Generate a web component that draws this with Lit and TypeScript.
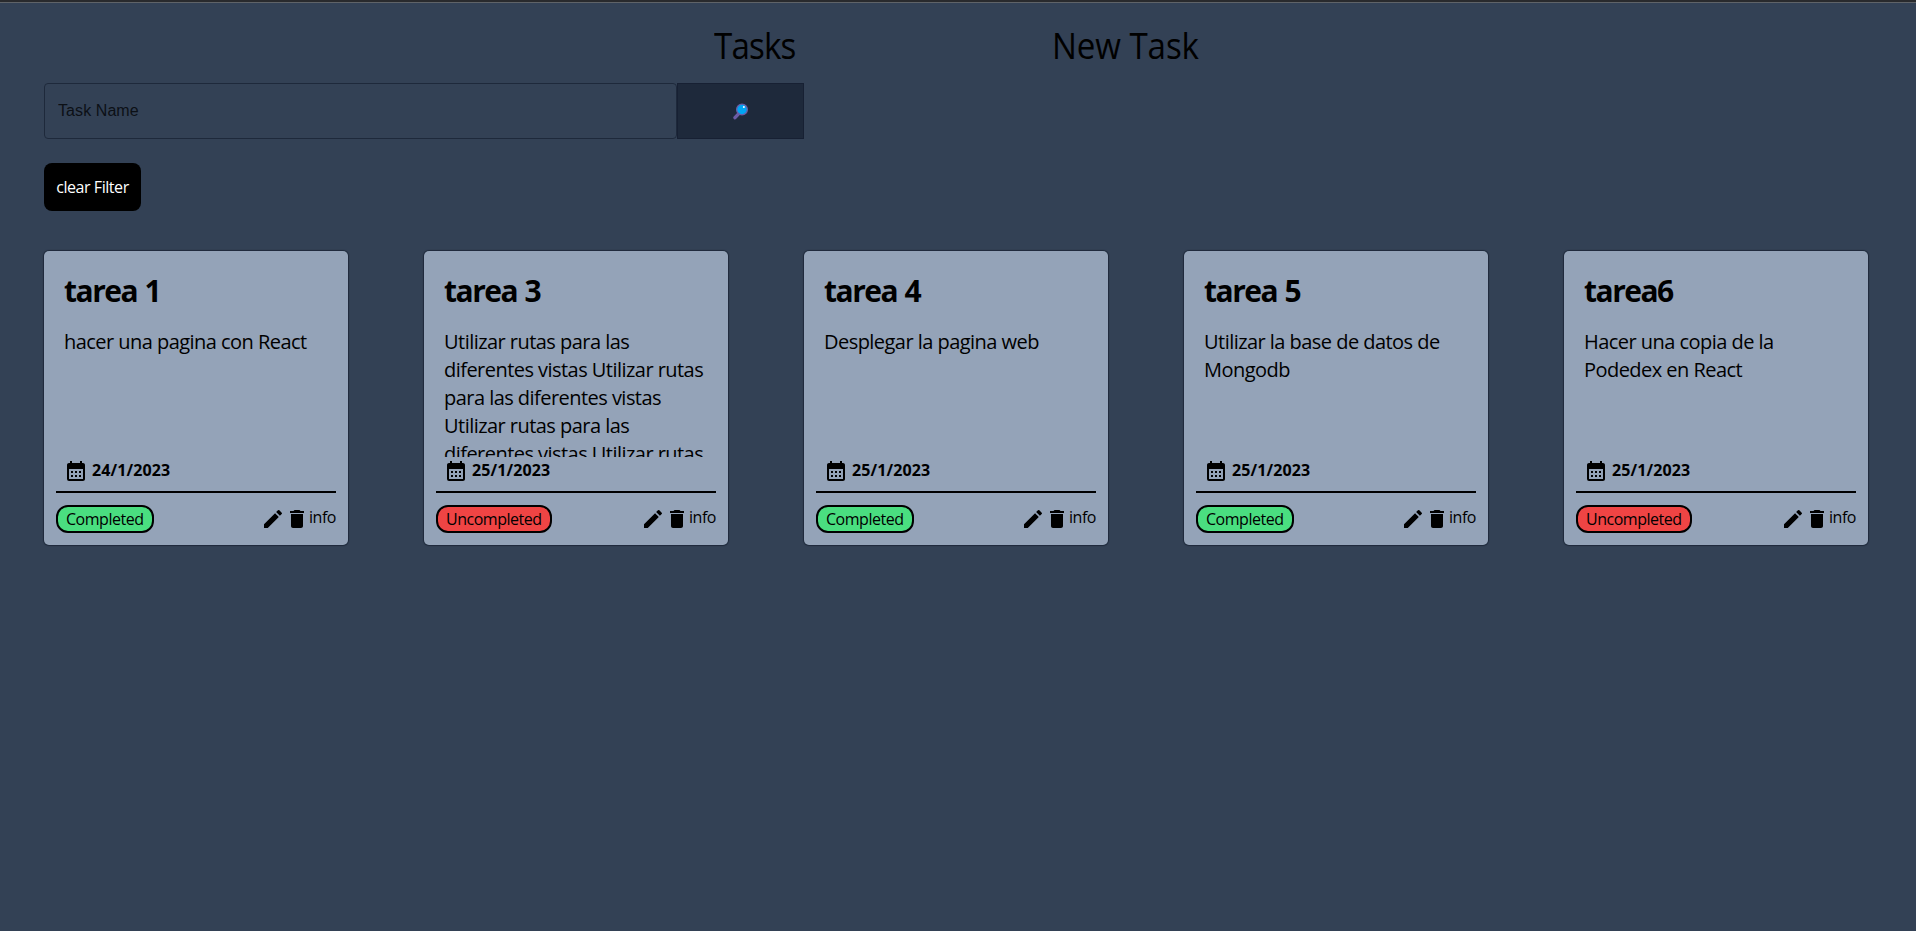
import { LitElement, html, css } from "lit";
import { customElement, property } from "lit/decorators.js";

interface Task {
  title: string;
  description: string;
  date: string;
  done: boolean;
}

const tasks: Task[] = [
  { title: "tarea 1", description: "hacer una pagina con React", date: "24/1/2023", done: true },
  {
    title: "tarea 3",
    description:
      "Utilizar rutas para las diferentes vistas Utilizar rutas para las diferentes vistas Utilizar rutas para las diferentes vistas Utilizar rutas",
    date: "25/1/2023",
    done: false,
  },
  { title: "tarea 4", description: "Desplegar la pagina web", date: "25/1/2023", done: true },
  { title: "tarea 5", description: "Utilizar la base de datos de Mongodb", date: "25/1/2023", done: true },
  { title: "tarea6", description: "Hacer una copia de la Podedex en React", date: "25/1/2023", done: false },
];

@customElement("task-card")
export class TaskCard extends LitElement {
  @property({ attribute: false }) task!: Task;

  static styles = css`
    :host {
      display: flex;
      flex-direction: column;
      box-sizing: border-box;
      width: 304px;
      height: 294px;
      padding: 12px;
      border-radius: 5px;
      background: #94a3b8;
      box-shadow: 0 0 1px 1px #1e293b;
    }
    .title {
      margin: 0 8px;
      height: 56px;
      font-size: 30px;
      line-height: 56px;
      font-weight: 700;
      letter-spacing: -1.5px;
      word-spacing: 1px;
    }
    .description {
      margin: 9px 8px 0;
      height: 129px;
      overflow: hidden;
      font-size: 20px;
      line-height: 28px;
      letter-spacing: -0.54px;
    }
    .date {
      display: flex;
      align-items: flex-start;
      gap: 4px;
      box-sizing: border-box;
      height: 36px;
      padding: 2px 0 0 8px;
      border-bottom: 2px solid #000;
      font-size: 16px;
      line-height: 24px;
      font-weight: 700;
      letter-spacing: 0.1px;
    }
    .date-text {
      margin-top: -1px;
    }
    .calendar {
      width: 24px;
      height: 24px;
    }
    .footer {
      display: flex;
      justify-content: space-between;
      padding-top: 12px;
      font-size: 16px;
      line-height: 24px;
      letter-spacing: -0.48px;
    }
    .badge {
      box-sizing: border-box;
      height: 28px;
      padding: 0 8px;
      border: 2px solid #000;
      border-radius: 12px;
      background: #ef4444;
    }
    .badge.done {
      background: #4ade80;
    }
    .actions {
      display: flex;
    }
    .info {
      width: 27px;
    }
    .icon {
      width: 24px;
      height: 24px;
      margin-top: 2px;
    }
  `;

  render() {
    const { title, description, date, done } = this.task;
    return html`
      <div class="title">${title}</div>
      <div class="description">${description}</div>
      <div class="date">
        <svg class="calendar" viewBox="0 0 24 24">
          <path d="M19 4h-1V2h-2v2H8V2H6v2H5c-1.11 0-1.99.9-1.99 2L3 20a2 2 0 0 0 2 2h14c1.1 0 2-.9 2-2V6c0-1.1-.9-2-2-2zm0 16H5V10h14v10zM9 14H7v-2h2v2zm4 0h-2v-2h2v2zm4 0h-2v-2h2v2zm-8 4H7v-2h2v2zm4 0h-2v-2h2v2zm4 0h-2v-2h2v2z" />
        </svg>
        <span class="date-text">${date}</span>
      </div>
      <div class="footer">
        <span class="badge ${done ? "done" : ""}">${done ? "Completed" : "Uncompleted"}</span>
        <div class="actions">
          <svg class="icon" viewBox="0 0 24 24">
            <path d="M3 17.25V21h3.75L17.81 9.94l-3.75-3.75L3 17.25zM20.71 7.04a.996.996 0 0 0 0-1.41l-2.34-2.34a.996.996 0 0 0-1.41 0l-1.83 1.83 3.75 3.75 1.83-1.83z" />
          </svg>
          <svg class="icon" viewBox="0 0 24 24">
            <path d="M6 19c0 1.1.9 2 2 2h8c1.1 0 2-.9 2-2V7H6v12zM19 4h-3.5l-1-1h-5l-1 1H5v2h14V4z" />
          </svg>
          <span class="info">info</span>
        </div>
      </div>
    `;
  }
}

@customElement("app-root")
export class AppRoot extends LitElement {
  static styles = css`
    :host {
      display: block;
      box-sizing: border-box;
      min-height: 931px;
      border-top: 2px solid #292a2d;
      background: #334155;
      color: #000;
      font-family: "Open Sans", "Noto Sans", sans-serif;
    }
    .nav {
      display: flex;
      justify-content: center;
      gap: 256px;
      height: 81px;
      border-top: 1px solid #5f6368;
      box-sizing: border-box;
      font-size: 36px;
      line-height: 85px;
    }
    .link {
      white-space: nowrap;
      transform: scaleX(0.92);
      transform-origin: left;
    }
    .tasks {
      width: 82px;
      letter-spacing: -0.9px;
    }
    .new {
      width: 150px;
      letter-spacing: -0.1px;
    }
    .search {
      display: flex;
      width: 760px;
      height: 56px;
      margin-left: 44px;
    }
    .field {
      box-sizing: border-box;
      width: 633px;
      padding: 0 13px;
      border: 1px solid #1e293b;
      border-radius: 4px;
      background: transparent;
      font: 16px "Liberation Sans", sans-serif;
      letter-spacing: 0.08px;
      outline: none;
    }
    .field::placeholder {
      color: #0c1016;
      opacity: 1;
    }
    .go {
      display: flex;
      flex: 1;
      align-items: center;
      justify-content: center;
      padding: 0;
      border: 1px solid #172033;
      background: #1e293b;
    }
    .clear {
      display: block;
      width: 97px;
      height: 48px;
      margin: 24px 0 40px 44px;
      padding: 0;
      border: 0;
      border-radius: 8px;
      background: #000;
      color: #fff;
      font: 16px "Open Sans", sans-serif;
      letter-spacing: -0.45px;
    }
    .cards {
      display: flex;
      justify-content: space-between;
      width: 1824px;
      margin-left: 44px;
    }
  `;

  render() {
    return html`
      <nav class="nav"><span class="link tasks">Tasks</span><span class="link new">New Task</span></nav>
      <div class="search">
        <input class="field" placeholder="Task Name" />
        <button class="go">
          <svg width="18" height="18" viewBox="0 0 18 18">
            <path d="M3 15.7 6.8 11.6" stroke="#6b5ca5" stroke-width="3.4" stroke-linecap="round" />
            <circle cx="10" cy="7.5" r="5.4" fill="#00a6f4" stroke="#6b5ca5" stroke-width="1.3" />
            <circle cx="11.9" cy="5" r="1" fill="#fff" />
          </svg>
        </button>
      </div>
      <button class="clear">clear Filter</button>
      <main class="cards">${tasks.map((t) => html`<task-card .task=${t}></task-card>`)}</main>
    `;
  }
}
